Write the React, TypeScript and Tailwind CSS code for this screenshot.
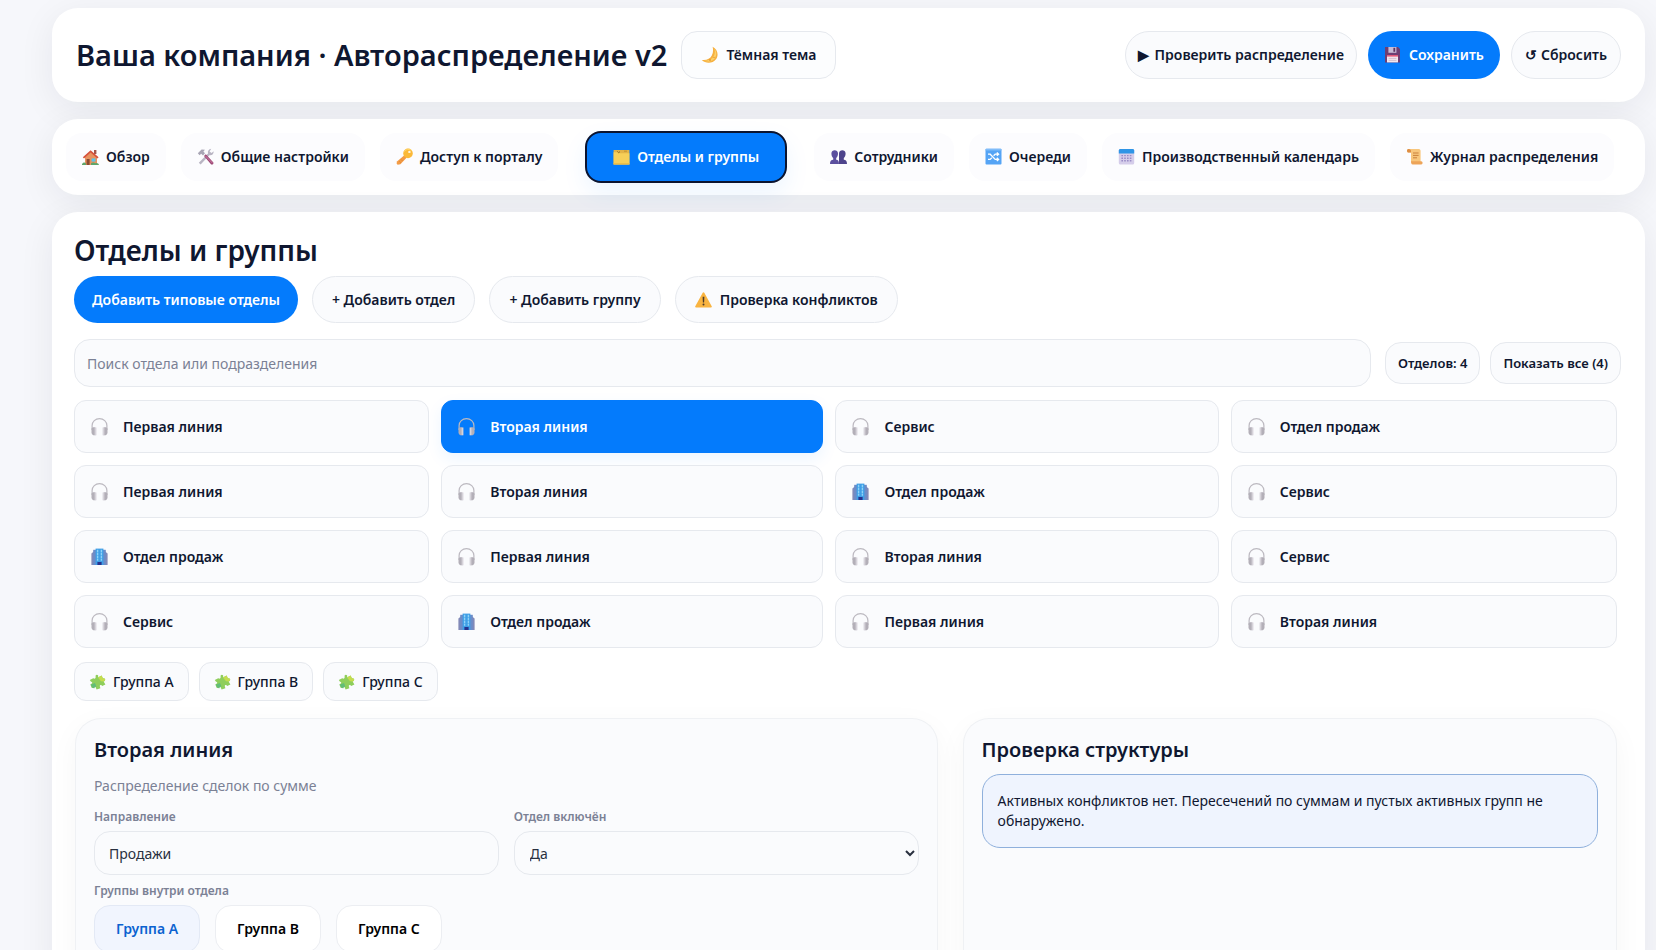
import { useState } from 'react';
import type { ReactNode } from 'react';
import clsx from 'clsx';

type IconName =
  | 'house'
  | 'tools'
  | 'key'
  | 'folder'
  | 'people'
  | 'shuffle'
  | 'calendar'
  | 'scroll'
  | 'moon'
  | 'floppy'
  | 'warning'
  | 'headphones'
  | 'office'
  | 'puzzle';

const ICONS: Record<IconName, ReactNode> = {
  house: (
    <>
      <path d="M3 8.5 9 3.5l6 5V17H3z" fill="#e8925f" />
      <path d="M12 2h2.4v4H12z" fill="#a5554a" />
      <path d="M.8 9.2 8.6 2.3l8 7-1.2 1.1-6.8-5.8L2 10.4z" fill="#d6523c" />
      <path d="M4.6 11h3v6h-3z" fill="#8a4b32" />
      <path d="M9.6 10.4h3.8v3.2H9.6z" fill="#5cc3e6" />
      <path d="M0 16c1-2 3-2 4-.6V17H0zM9 15.2c1.600-1 3.400-.8 4.400 0 1.600-.8 3.400.2 3.600 1.800H9z" fill="#5fa56a" />
    </>
  ),
  tools: (
    <>
      <path d="m3.600 16.400-1.800-1.600L11 5.400c-.6-2 .6-4.400 3.200-4.600l-1.600 2.600 2 1.600 2-1.800c.4 2.600-1.800 4.600-4.200 4z" fill="#b9b5c3" />
      <path d="M.8 5.200 4.600 1.400l3.400.4-1.600 1.600 1.600 1.800-2 2.200-1.800-1.600-1.600 1.400z" fill="#a9a6b5" />
      <path d="m7 8 1.800-1.800 7.600 8.200c.4 1.400-.8 2.400-2.200 2z" fill="#9a4773" />
      <path d="m8 8.200.8-.8 7 7.400-.6.800z" fill="#c0709a" />
    </>
  ),
  key: (
    <>
      <path d="m8.400 7.200 2.400 2.400-6.400 6.600-2.800.6-1-1.200.4-2.200z" fill="#f39b45" />
      <path d="m3.400 13.400 1.200 1.200M5.200 11.600l1.200 1.200" stroke="#d97c2d" strokeWidth=".8" />
      <circle cx="12" cy="5.400" r="4.800" fill="#fbb939" />
      <path d="M8.400 3.600A4.800 4.800 0 0 1 15.600 2.400" stroke="#ffd768" strokeWidth="1" fill="none" />
      <circle cx="13.400" cy="3.900" r="1.200" fill="#fff3dc" />
    </>
  ),
  folder: (
    <>
      <path d="M.6 2h15.800v14.400H.6z" fill="#e3b347" />
      <path d="M.6 4.200h5l1.200 1h9.600v11.200H.6z" fill="#f7cf58" />
      <path d="M4.400 3.400 5.600 4.800l1.400-1.200" stroke="#8f6a22" strokeWidth="1" fill="none" />
      <path d="M11 2.600h3v1.200h-3z" fill="#c99835" />
      <path d="M.6 15h15.800v1.400H.6z" fill="#edbd48" />
    </>
  ),
  people: (
    <>
      <path d="M9 5.600c0-4.400 6.600-4.400 6.600 0 0 2-.8 3.600-1.800 4.400v1.800c2 .2 3.200 1.200 3.200 4.200H9z" fill="#4e448c" />
      <path d="M1.400 5.600c0-4.400 6.600-4.400 6.600 0 0 2-.8 3.600-1.800 4.400v1.800c2 .2 2.800 1.200 2.800 4.200H0c0-3 1.200-4 3.200-4.200V10c-1-.8-1.800-2.400-1.800-4.400z" fill="#5b4f9f" />
    </>
  ),
  shuffle: (
    <>
      <rect x=".5" y=".8" width="16" height="15.800" rx="1" fill="#55a4f5" />
      <path d="M.5 1.600a.8.800 0 0 1 .8-.8h14.400a.8.800 0 0 1 .8.800v1H.5z" fill="#7fbcf9" />
      <path
        d="M3 6.200h2.200l5 5.200h3M3 11.400h2.200l1.600-1.600M8.600 7.800l1.600-1.600h3M11.800 4.600l1.800 1.600-1.800 1.600M11.800 9.800l1.800 1.600-1.800 1.600"
        stroke="#fff"
        strokeWidth="1.300"
        fill="none"
      />
    </>
  ),
  calendar: (
    <>
      <rect x=".8" y="1" width="15.400" height="15.600" rx="1.600" fill="#d5cdea" />
      <path d="M.8 2.600C.8 1.600 1.500 1 2.400 1h12.200c.9 0 1.600.6 1.600 1.600v3H.8z" fill="#2f95e6" />
      <path d="M3.400 7.600h10.200M3.400 10.200h10.200M3.400 12.800h10.200" stroke="#9a8cc6" strokeWidth="1.400" strokeDasharray="1.600 1.200" />
    </>
  ),
  scroll: (
    <>
      <path d="M2.600 1h10.200c1.400 0 1.800 1 1.800 2v11H5V4.600H2.600C.6 4.600.4 1 2.600 1z" fill="#f8c67c" />
      <path d="M2.600 1C.4 1 .6 4.600 2.600 4.600H5V3c0-1-.8-2-2.400-2z" fill="#dd8d44" />
      <path d="M6.200 13.200h9c1.800 0 1.800 3.200 0 3.200H6.800C5 16.400 5 14.600 5 13.200z" fill="#eda458" />
      <path d="M7 5h5.600M7 7.400h5.600M7 9.800h4" stroke="#c9803d" strokeWidth="1" />
    </>
  ),
  moon: (
    <>
      <path d="M11.600.8c5 2.400 6.400 8.400 3.400 12.400-3.200 4.400-10.200 4.800-14.200.8 4.600.6 8.400-1 10-4.400 1.400-3 1.600-5.800.8-8.800z" fill="#f6b03f" />
      <path d="M13.400 2.400c2.400 3 2.600 7 .2 10-2.400 3.200-6.800 3.800-10.600 2.400 5 0 8.400-1.600 10-5 1-2.400 1.200-4.800.4-7.400z" fill="#fbd06a" />
      <circle cx="9" cy="14" r=".9" fill="#e39530" />
      <circle cx="13" cy="11.400" r=".7" fill="#e39530" />
    </>
  ),
  floppy: (
    <>
      <path d="M1 1h13l2 2v13.400H1z" fill="#6d3f73" />
      <path d="M4.400 1h8v5.800h-8z" fill="#c7bcd6" />
      <path d="M9.400 1.800h1.800v4H9.400z" fill="#5a3360" />
      <path d="M3 9h11v7.400H3z" fill="#f3e7ee" />
      <path d="M3 9h11v1.600H3z" fill="#e25a7a" />
      <path d="M4.600 12.400h7.800M4.600 14.400h7.800" stroke="#c9b6c8" strokeWidth=".8" />
    </>
  ),
  warning: (
    <>
      <path d="M7.700 1.800c.4-.7 1.200-.7 1.600 0l7.400 13.400c.4.7 0 1.200-.8 1.200H1.100c-.8 0-1.200-.5-.8-1.200z" fill="#f9b440" />
      <path d="M7.600 5.800h1.800l-.3 5.800H7.900z" fill="#4b3a2a" />
      <circle cx="8.500" cy="13.600" r="1" fill="#4b3a2a" />
    </>
  ),
  headphones: (
    <>
      <path d="M1.100 12V7.600a7.400 7 0 0 1 14.800 0V12" stroke="#bcb9c0" strokeWidth="1.200" fill="none" />
      <path d="M.5 10.800c.8-1.600 2.600-1.800 4-1v7.400C2.200 17.800.5 16.400.5 14.200z" fill="#b3afb8" />
      <path d="M16.500 10.800c-.8-1.600-2.600-1.800-4-1v7.400c2.300.6 4-.8 4-3z" fill="#b3afb8" />
      <path d="M3.600 9.600h1.800v7.600H3.600zM11.600 9.600h1.800v7.600h-1.800z" fill="#d6d3da" />
    </>
  ),
  office: (
    <>
      <path d="M.4 5.400 3.400 3v14H.4zM16.600 5.400 13.600 3v14h3z" fill="#8189b8" />
      <path d="M2.200 1.800h12.600V17H2.200z" fill="#6c8cc8" />
      <path d="M4.600.6h7.800V17H4.600z" fill="#3f9fe6" />
      <path d="M6.600 1.800v11M10.400 1.800v11" stroke="#8ed2f8" strokeWidth="1.400" strokeDasharray="2.400 .6" />
      <path d="M6.400 14h4.200v3H6.400z" fill="#26328e" />
    </>
  ),
  puzzle: (
    <>
      <path
        d="M6.600 2.600c1-1.600 3-.6 2.600 1l-.2 1 3.600-2.200 1.400 3c1.800-.6 3 1.400 1.600 2.600l-1 .6 1.800 3-3.200 1.400c-.6-1.200-2.400-1.200-2.400.2l.6 2-3.800 1.400-1-2.400c-.8-1-2.200-.4-2 1l-2-.4-1.200-3.400 1.400-.8c1-.8.2-2-.8-1.800L.8 7l3.400-1.800.8.4c1.400.2 1.800-.8 1.600-1.600z"
        fill="#8fce5b"
      />
      <path d="m9 4.600 3.600-2.200 1.400 3c1.800-.6 3 1.400 1.600 2.600l-1 .6-2.600-.4z" fill="#c4dc4f" />
      <path d="M1.600 11.800 6 10l1.600 4.200c-.8-1-2.200-.4-2 1l-2-.4z" fill="#62bd77" />
    </>
  ),
};

function Icon({ name }: { name: IconName }) {
  return (
    <svg viewBox="0 0 17 18" className="h-[18px] w-[17px] shrink-0" aria-hidden="true">
      {ICONS[name]}
    </svg>
  );
}

const NAV: { label: string; icon: IconName }[] = [
  { label: 'Обзор', icon: 'house' },
  { label: 'Общие настройки', icon: 'tools' },
  { label: 'Доступ к порталу', icon: 'key' },
  { label: 'Отделы и группы', icon: 'folder' },
  { label: 'Сотрудники', icon: 'people' },
  { label: 'Очереди', icon: 'shuffle' },
  { label: 'Производственный календарь', icon: 'calendar' },
  { label: 'Журнал распределения', icon: 'scroll' },
];

const DEPARTMENTS: { label: string; icon: IconName }[] = [
  { label: 'Первая линия', icon: 'headphones' },
  { label: 'Вторая линия', icon: 'headphones' },
  { label: 'Сервис', icon: 'headphones' },
  { label: 'Отдел продаж', icon: 'headphones' },
  { label: 'Первая линия', icon: 'headphones' },
  { label: 'Вторая линия', icon: 'headphones' },
  { label: 'Отдел продаж', icon: 'office' },
  { label: 'Сервис', icon: 'headphones' },
  { label: 'Отдел продаж', icon: 'office' },
  { label: 'Первая линия', icon: 'headphones' },
  { label: 'Вторая линия', icon: 'headphones' },
  { label: 'Сервис', icon: 'headphones' },
  { label: 'Сервис', icon: 'headphones' },
  { label: 'Отдел продаж', icon: 'office' },
  { label: 'Первая линия', icon: 'headphones' },
  { label: 'Вторая линия', icon: 'headphones' },
];

const GROUPS = ['Группа A', 'Группа B', 'Группа C'];

const panel = 'rounded-[26px] bg-white shadow-[0_8px_36px_rgba(15,23,42,0.07)]';
const outline = 'border border-[#e6e9ee] bg-[#fafbfd]';

export default function App() {
  const [tab, setTab] = useState('Отделы и группы');
  const [department, setDepartment] = useState(1);
  const [group, setGroup] = useState('Группа A');
  const [search, setSearch] = useState('');
  const [direction, setDirection] = useState('Продажи');
  const [enabled, setEnabled] = useState('Да');

  return (
    <div className="flex min-h-screen flex-col gap-[17px] bg-[#f6f7fb] pt-2 pr-[11px] pl-[52px] font-['Noto_Sans',sans-serif] text-sm text-[#0f1730]">
      <header className={clsx(panel, 'flex items-center px-6 py-[23px]')}>
        <h1 className="text-[29px] leading-[46px] font-semibold">Ваша компания · Автораспределение v2</h1>
        <button className="ml-3.5 flex h-12 items-center gap-2 rounded-2xl border border-[#e6e9ee] bg-[#fcfdfe] px-[19px] font-semibold">
          <Icon name="moon" />
          Тёмная тема
        </button>
        <div className="ml-auto flex gap-[11px]">
          <button className={clsx(outline, 'flex h-12 items-center gap-1.5 rounded-3xl px-3 font-semibold')}>
            <span aria-hidden="true">▶</span>
            Проверить распределение
          </button>
          <button className="flex h-12 items-center gap-2 rounded-3xl bg-[#047bfc] px-4 font-semibold text-white">
            <Icon name="floppy" />
            Сохранить
          </button>
          <button className={clsx(outline, 'flex h-12 items-center gap-1 rounded-3xl px-[13px] font-semibold')}>
            <span aria-hidden="true">↺</span>
            Сбросить
          </button>
        </div>
      </header>

      <nav className={clsx(panel, 'flex items-center gap-[15px] px-3.5 py-3')}>
        {NAV.map((item) => (
          <button
            key={item.label}
            onClick={() => setTab(item.label)}
            className={clsx(
              'flex items-center gap-[7px] rounded-2xl font-semibold whitespace-nowrap',
              tab === item.label
                ? 'mx-3 h-[52px] border-2 border-[#0b1430] bg-[#047bfc] px-[26px] text-white shadow-[0_10px_24px_rgba(4,123,252,0.08)]'
                : 'h-12 bg-[#fcfcfe] px-4'
            )}
          >
            <Icon name={item.icon} />
            {item.label}
          </button>
        ))}
      </nav>

      <main className={clsx(panel, 'flex flex-1 flex-col rounded-b-none pt-5 pr-6 pl-[22px]')}>
        <h2 className="text-[28px] leading-9 font-semibold">Отделы и группы</h2>

        <div className="mt-2 flex gap-3.5">
          <button className="h-[47px] rounded-3xl bg-[#047bfc] px-[18px] font-semibold text-white">
            Добавить типовые отделы
          </button>
          <button className={clsx(outline, 'h-[47px] rounded-3xl px-[19px] font-semibold')}>+ Добавить отдел</button>
          <button className={clsx(outline, 'h-[47px] rounded-3xl px-[19px] font-semibold')}>+ Добавить группу</button>
          <button className={clsx(outline, 'flex h-[47px] items-center gap-2 rounded-3xl px-[19px] font-semibold')}>
            <Icon name="warning" />
            Проверка конфликтов
          </button>
        </div>

        <div className="mt-4 flex items-center">
          <input
            type="search"
            aria-label="Поиск отдела или подразделения"
            placeholder="Поиск отдела или подразделения"
            value={search}
            onChange={(e) => setSearch(e.target.value)}
            className={clsx(outline, 'h-12 min-w-0 flex-1 rounded-2xl px-3 placeholder-[#7b8195] outline-none')}
          />
          <span className={clsx(outline, 'ml-3.5 flex h-[42px] items-center rounded-2xl px-3 text-[13px] font-semibold')}>
            Отделов: 4
          </span>
          <button className={clsx(outline, 'ml-2.5 h-[42px] rounded-2xl px-3 text-[13px] font-semibold')}>
            Показать все (4)
          </button>
        </div>

        <div className="mt-[13px] mr-1 grid grid-cols-[355fr_382fr_383fr_386fr] gap-x-3 gap-y-3">
          {DEPARTMENTS.map((item, i) => (
            <button
              key={i}
              onClick={() => setDepartment(i)}
              className={clsx(
                'flex h-[53px] items-center gap-[15px] rounded-xl border px-4 font-semibold',
                department === i
                  ? 'border-[#047bfc] bg-[#047bfc] text-white shadow-[0_6px_16px_rgba(4,123,252,0.08)]'
                  : 'border-[#e6e9ee] bg-[#fafbfd]'
              )}
            >
              <Icon name={item.icon} />
              {item.label}
            </button>
          ))}
        </div>

        <div className="mt-3.5 flex gap-2.5">
          {GROUPS.map((name) => (
            <button key={name} className={clsx(outline, 'flex h-[39px] items-center gap-[7px] rounded-xl px-3.5 font-medium')}>
              <Icon name="puzzle" />
              {name}
            </button>
          ))}
        </div>

        <div className="mt-[17px] mr-1 ml-px grid flex-1 grid-cols-[862fr_654fr] gap-[25px]">
          <section className="rounded-t-[26px] border border-b-0 border-[#eff1f4] bg-[#fafbfd] px-[18px] pt-[15px] pb-6 shadow-[0_8px_30px_rgba(15,23,42,0.04)]">
            <h3 className="text-xl leading-8 font-semibold">Вторая линия</h3>
            <p className="mt-2 leading-6 text-[#7b8195]">Распределение сделок по сумме</p>
            <div className="mt-[11px] grid grid-cols-2 gap-[15px]">
              <div>
                <label htmlFor="direction" className="block text-xs leading-4 font-semibold text-[#7b8195]">
                  Направление
                </label>
                <input
                  id="direction"
                  type="text"
                  value={direction}
                  onChange={(e) => setDirection(e.target.value)}
                  className={clsx(outline, 'mt-1.5 h-11 w-full rounded-2xl px-3.5 text-[#29303f] outline-none')}
                />
              </div>
              <div>
                <label htmlFor="enabled" className="block text-xs leading-4 font-semibold text-[#7b8195]">
                  Отдел включён
                </label>
                <select
                  id="enabled"
                  value={enabled}
                  onChange={(e) => setEnabled(e.target.value)}
                  className={clsx(outline, 'mt-1.5 h-11 w-full rounded-2xl pr-1.5 pl-[11px] text-[#29303f] outline-none')}
                >
                  <option>Да</option>
                  <option>Нет</option>
                </select>
              </div>
            </div>
            <p className="mt-2 text-xs leading-4 font-semibold text-[#7b8195]">Группы внутри отдела</p>
            <div className="mt-1.5 flex gap-[15px]">
              {GROUPS.map((name) => (
                <button
                  key={name}
                  onClick={() => setGroup(name)}
                  className={clsx(
                    'h-12 rounded-2xl border px-[21px] font-semibold',
                    group === name
                      ? 'border-[#e3e9f5] bg-[#f1f5fe] text-[#0b62d0]'
                      : 'border-[#eceef2] bg-white text-black'
                  )}
                >
                  {name}
                </button>
              ))}
            </div>
          </section>

          <section className="rounded-t-[26px] border border-b-0 border-[#eff1f4] bg-[#fafbfd] px-[18px] pt-[15px] pb-6 shadow-[0_8px_30px_rgba(15,23,42,0.04)]">
            <h3 className="text-xl leading-8 font-semibold">Проверка структуры</h3>
            <div className="mt-2 rounded-[18px] border border-[#8fb0dc] bg-[#eff4fe] px-[15px] py-4 leading-5">
              Активных конфликтов нет. Пересечений по суммам и пустых активных групп не обнаружено.
            </div>
          </section>
        </div>
      </main>
    </div>
  );
}
